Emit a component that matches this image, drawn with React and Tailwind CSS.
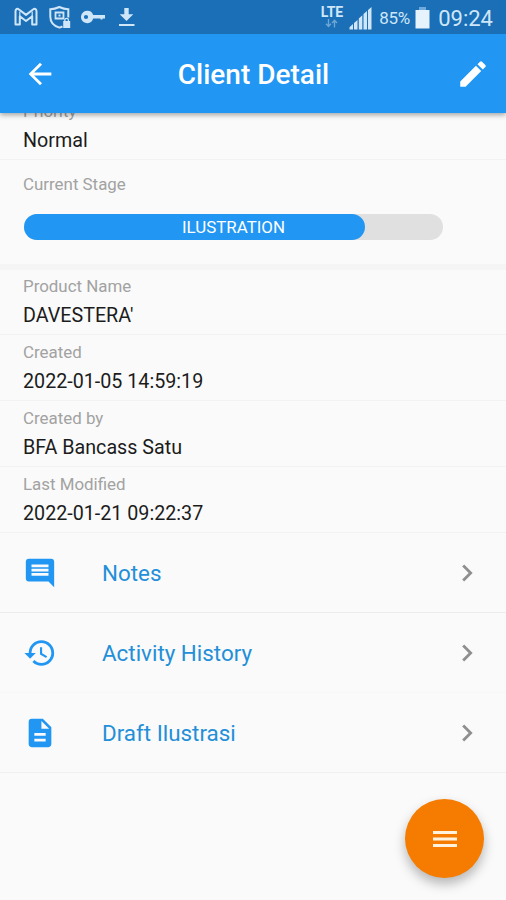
import React from 'react';
import {
  MdArrowBack,
  MdEdit,
  MdComment,
  MdHistory,
  MdDescription,
  MdChevronRight,
} from 'react-icons/md';

const details = [
  { label: 'Product Name', value: "DAVESTERA'" },
  { label: 'Created', value: '2022-01-05 14:59:19' },
  { label: 'Created by', value: 'BFA Bancass Satu' },
  { label: 'Last Modified', value: '2022-01-21 09:22:37' },
];

const links = [
  { id: 'notes', name: 'Notes', icon: MdComment, line: 'border-[#ececec]' },
  { id: 'history', name: 'Activity History', icon: MdHistory, line: 'border-[#f7f7f7]' },
  { id: 'draft', name: 'Draft Ilustrasi', icon: MdDescription, line: 'border-[#f0f0f0]' },
];

const StatusBar = () => (
  <div className="flex h-[34px] items-center justify-between bg-[#1a6fb7] pl-[14px] pr-[13px] text-[#cfe6f8]">
    <div className="flex items-center">
      {/* Mail */}
      <svg width="24" height="20" viewBox="0 0 24 20" fill="none" stroke="currentColor" strokeWidth="2" strokeLinejoin="round">
        <path d="M1.500 17.600V4.200C1.500 1.900 3.400 1.200 5 2.500l7 5.400 7-5.400c1.600-1.300 3.500-.6 3.500 1.700v13.400h-4.300V9.300L12 14 5.800 9.300v8.300z" />
        <path d="M5.800 9.300V4.500M18.200 9.300V4.500" strokeWidth="1.200" />
      </svg>
      {/* Shield */}
      <svg className="ml-[10px]" width="24" height="24" viewBox="0 0 24 24" fill="none" stroke="currentColor" strokeWidth="2">
        <path d="M14.500 21.400c-1 .6-2 1-3 1.200C5.500 21 2.300 17.500 2.300 11.500V4.200C5.500 4.200 8.500 3.400 11.300 2c2.800 1.400 5.800 2.200 9 2.200v8.300" />
        <path d="M7.500 7.500h8v6h-8z" strokeWidth="1.800" />
        <path d="M10.500 10.500h2" />
        <path d="M15.200 16h7v7h-7z" fill="currentColor" stroke="none" />
        <path d="M16.800 17v-1.900a1.800 1.800 0 0 1 3.600 0V17" strokeWidth="1.300" />
      </svg>
      {/* Key */}
      <svg className="ml-[9px]" width="24" height="14" viewBox="0 0 24 14" fill="currentColor">
        <path fillRule="evenodd" d="M6.500.8a6.200 6.200 0 0 1 5.700 4.200H24v3.500h-2.500v1h-2v-1h-7.300A6.200 6.200 0 1 1 6.500.8zM5 4.900a2.100 2.100 0 1 0 0 4.200 2.100 2.100 0 0 0 0-4.200z" />
      </svg>
      {/* Download */}
      <svg className="ml-[13px]" width="18" height="20" viewBox="0 0 18 20" fill="currentColor">
        <path d="M6.300 1h4.400v6.200h4.600L8.500 14 1.700 7.200h4.600zM1 17h15.500v2H1z" />
      </svg>
    </div>

    <div className="flex items-center">
      <div className="flex flex-col items-center">
        <span className="text-[14px] font-bold leading-[13px]">LTE</span>
        <svg width="13" height="9" viewBox="0 0 13 9" fill="none" stroke="#6ba6d6" strokeWidth="1.400">
          <path d="M3.500 0v7M1 4.800 3.500 7.500 6 4.800M9.500 8.500v-7M7 4 9.500 1.300 12 4" />
        </svg>
      </div>
      <svg className="ml-[6px] mt-[2px]" width="23" height="23" viewBox="0 0 23 23" fill="currentColor">
        <path d="M.5 22.500v-2.200L4 17v5.500zM5 22.500v-6.400L8.500 13v9.500zM9.800 22.500V11.600l3.500-3.300v14.200zM14.500 22.500V7.100L18 3.900v18.600zM19 22.500V3l3.500-3v22.500z" />
      </svg>
      <span className="ml-[7px] mt-[2px] w-[32px] whitespace-nowrap text-[17px] leading-none tracking-[-0.300px]">85%</span>
      <svg className="ml-[4px] mt-[2px]" width="15" height="22" viewBox="0 0 15 22" fill="#e6f2fc">
        <path d="M4 0h7v3H4z" fill="#6faadc" />
        <path d="M.5 3h14v18.500H.5z" />
      </svg>
      <span className="ml-[8px] mt-[3px] whitespace-nowrap text-[22px] leading-none">09:24</span>
    </div>
  </div>
);

const Field = ({ label, value }) => (
  <div className="flex h-[66px] flex-col border-b border-[#f2f2f2] pl-[23px] pt-[7px]">
    <span className="text-[16.900px] leading-[20px] text-[#a2a2a2]">{label}</span>
    <span className="mt-[7px] text-[19.700px] leading-[26px] text-[#1c1c1c]">{value}</span>
  </div>
);

const App = () => {
  return (
    <div className="relative h-[900px] w-[506px] overflow-hidden bg-[#fafafa] font-['Roboto',sans-serif]">
      {/* Header */}
      <div className="relative z-10 shadow-[0_2px_5px_rgba(0,0,0,0.35)]">
        <StatusBar />
        <div className="flex h-[79px] items-center bg-[#2196f3] pl-[23px] pr-[16px] text-white">
          <MdArrowBack size={34} />
          <h1 className="flex-1 pr-[6px] pt-[3px] text-center text-[28px] font-medium leading-none">Client Detail</h1>
          <MdEdit size={34} />
        </div>
      </div>

      {/* Scrolled content */}
      <div className="-mt-[19px]">
        <Field label="Priority" value="Normal" />

        <div className="flex h-[104px] flex-col pl-[23px] pt-[14px]">
          <span className="text-[16.900px] leading-[20px] text-[#a2a2a2]">Current Stage</span>
          <div className="ml-px mt-[20px] grid h-[26px] w-[419px] items-center rounded-full bg-[#e0e0e0]">
            <div className="col-start-1 row-start-1 h-full w-[341px] rounded-full bg-[#2196f3]" />
            <span className="col-start-1 row-start-1 text-center text-[16.900px] leading-none text-white">
              ILUSTRATION
            </span>
          </div>
        </div>
        <div className="-mb-px h-[6px] bg-[#f5f5f5]" />

        {details.map((item) => (
          <Field key={item.label} label={item.label} value={item.value} />
        ))}

        {links.map(({ id, name, icon: Icon, line }) => (
          <button
            key={id}
            className={`flex h-[80px] w-full items-center border-b pl-[23px] pr-[22px] ${line}`}
          >
            <Icon size={34} className="text-[#2196f3]" />
            <span className="ml-[45px] flex-1 pt-[2px] text-left text-[22.400px] leading-none text-[#238fd8]">{name}</span>
            <MdChevronRight size={34} className="text-[#8f8f8f]" />
          </button>
        ))}
      </div>

      {/* Menu button, floats over the list */}
      <button className="absolute bottom-[22px] right-[22px] flex h-[79px] w-[79px] items-center justify-center rounded-full bg-[#f57c00] shadow-[0_6px_12px_rgba(0,0,0,0.28)]">
        <svg width="24" height="18" viewBox="0 0 24 18" fill="#fff3e0">
          <path d="M0 1h24v3H0zM0 7.500h24v3H0zM0 14h24v3H0z" />
        </svg>
      </button>
    </div>
  );
};

export default App;
